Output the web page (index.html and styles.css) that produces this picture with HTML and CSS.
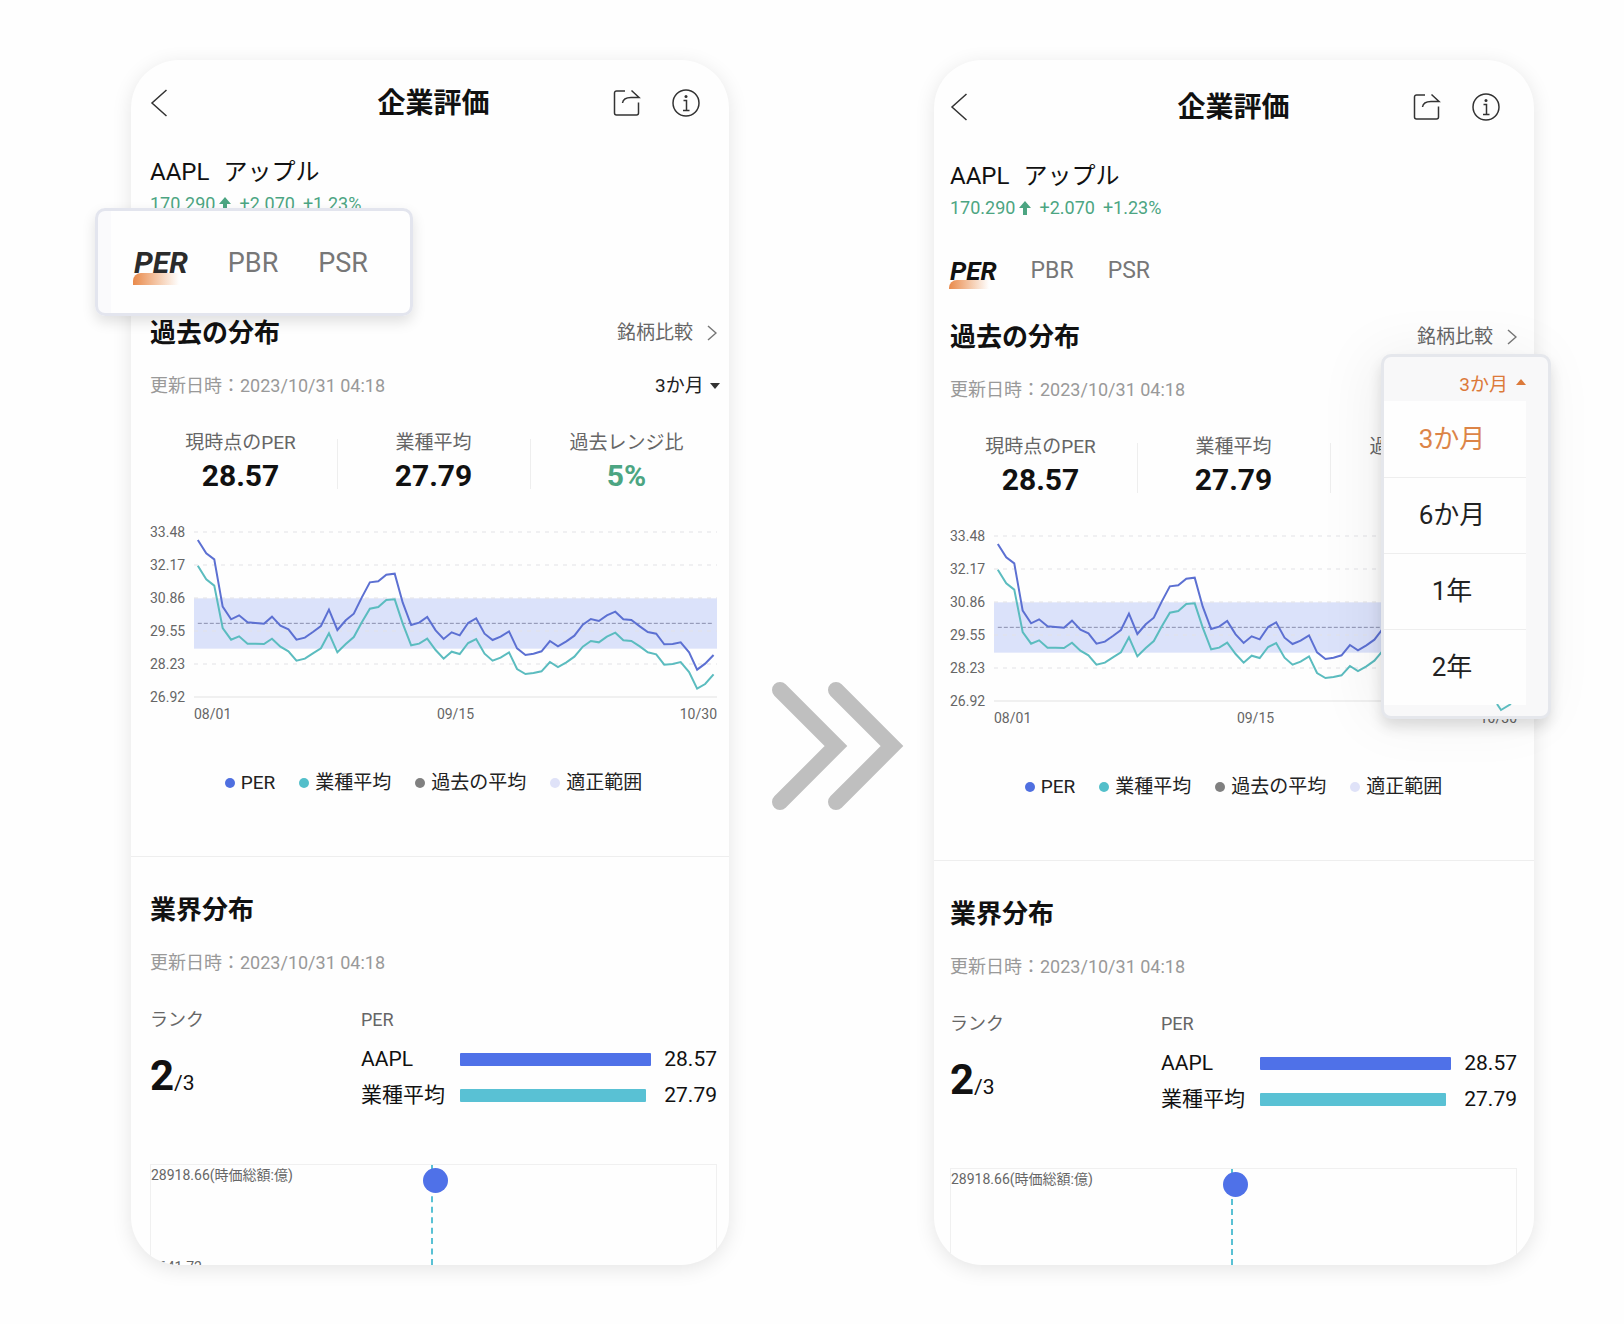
FILE: index.html
```
<!DOCTYPE html>
<html lang="ja">

<head>
    <meta charset="UTF-8">
    <meta name="viewport" content="width=device-width, initial-scale=1.0">
    <title>企業評価</title>
    <link rel="stylesheet" href="styles.css">
</head>

<body>
    <!-- shared icons and chart -->
    <svg class="defs" aria-hidden="true">
        <symbol id="icon-back" viewBox="0 0 18 28">
            <path d="M16.500 1L2 14l14.500 13" />
        </symbol>
        <symbol id="icon-share" viewBox="0 0 28 28">
            <path d="M12 2H3.500a2 2 0 0 0-2 2v20a2 2 0 0 0 2 2h20a2 2 0 0 0 2-2V13.500M18.500 1.500L26 8.500H18c-5 0-8 2-8.500 5.500" />
        </symbol>
        <symbol id="icon-info" viewBox="0 0 28 28">
            <circle cx="14" cy="14" r="13" />
            <path d="M11.500 11.500H14.500V21M11 21.500h6.500" />
            <circle class="fill" cx="14" cy="7.500" r="1.500" />
        </symbol>
        <symbol id="icon-next" viewBox="0 0 10 16">
            <path d="M1 1l8 7-8 7" />
        </symbol>
        <symbol id="chart" viewBox="0 0 1368 495" preserveAspectRatio="none">
            <rect class="band" x="0" y="199" width="1368" height="151" />
            <path class="grid" d="M0 0H1368M0 99H1368M0 198H1368M0 297H1368M0 396H1368" />
            <path class="axis" d="M0 495H1368" />
            <path class="average" d="M10 274H1359" />
            <polyline class="line-sector" points="10,101 32,142 53,161 75,288 97,323 118,313 140,335 161,335 183,336 204,320 226,344 247,358 268,386 290,380 311,364 332,349 353,304 375,361 397,336 418,315 439,271 460,230 482,225 503,204 525,202 546,275 568,340 589,335 610,320 632,354 653,380 674,359 695,366 717,333 738,321 760,365 781,386 802,377 824,361 845,411 867,426 888,423 909,418 931,390 952,405 974,391 995,374 1017,344 1038,327 1059,331 1080,314 1102,302 1123,325 1144,327 1166,343 1187,361 1209,367 1230,398 1252,396 1273,390 1295,420 1316,470 1337,456 1359,427" />
            <polyline class="line-per" points="10,24 32,64 53,82 75,224 97,262 118,250 140,271 161,273 183,275 204,254 226,281 247,292 268,323 290,317 311,300 332,282 353,233 375,294 397,265 418,245 439,196 460,151 482,148 503,128 525,125 546,212 568,279 589,272 610,255 632,295 653,321 674,301 695,310 717,273 738,259 760,305 781,324 802,314 824,298 845,349 867,369 888,365 909,358 931,327 952,343 974,328 995,311 1017,278 1038,261 1059,267 1080,250 1102,239 1123,262 1144,264 1166,283 1187,300 1209,305 1230,337 1252,336 1273,331 1295,361 1316,413 1337,395 1359,369" />
        </symbol>
    </svg>

    <main class="compare">
        <div class="phone">
            <div class="screen">
                <header class="header">
                    <button class="icon-button" aria-label="戻る"><svg class="icon back"><use href="#icon-back" /></svg></button>
                    <h1>企業評価</h1>
                    <div class="actions">
                        <button class="icon-button" aria-label="共有"><svg class="icon"><use href="#icon-share" /></svg></button>
                        <button class="icon-button" aria-label="情報"><svg class="icon"><use href="#icon-info" /></svg></button>
                    </div>
                </header>

                <section class="content">
                    <p class="symbol"><span>AAPL</span><span>アップル</span></p>
                    <p class="price">
                        <span>170.290</span>
                        <svg class="up" viewBox="0 0 12 14"><path d="M6 0l6 7H8v7H4V7H0z" /></svg>
                        <span>+2.070</span>
                        <span>+1.23%</span>
                    </p>
                    <div class="tabs-space"></div>

                    <div class="title-row">
                        <h2>過去の分布</h2>
                        <a class="more" href="#">銘柄比較<svg class="next"><use href="#icon-next" /></svg></a>
                    </div>
                    <div class="date-row">
                        <p class="date">更新日時：2023/10/31 04:18</p>
                        <div class="period">
                            <select aria-label="期間">
                                <option>3か月</option>
                                <option>6か月</option>
                                <option>1年</option>
                                <option>2年</option>
                            </select>
                            <span class="arrow-down"></span>
                        </div>
                    </div>

                    <dl class="stats">
                        <div class="stat"><dt>現時点のPER</dt><dd>28.57</dd></div>
                        <div class="stat"><dt>業種平均</dt><dd>27.79</dd></div>
                        <div class="stat"><dt>過去レンジ比</dt><dd class="green">5%</dd></div>
                    </dl>

                    <div class="chart">
                        <div class="y-labels"><span>33.48</span><span>32.17</span><span>30.86</span><span>29.55</span><span>28.23</span><span>26.92</span></div>
                        <svg class="plot"><use href="#chart" /></svg>
                        <div class="x-labels"><span>08/01</span><span>09/15</span><span>10/30</span></div>
                    </div>
                    <ul class="legend">
                        <li class="blue">PER</li>
                        <li class="teal">業種平均</li>
                        <li class="gray">過去の平均</li>
                        <li class="pale">適正範囲</li>
                    </ul>
                </section>

                <section class="content industry">
                    <h2>業界分布</h2>
                    <p class="date">更新日時：2023/10/31 04:18</p>
                    <div class="ranking">
                        <div>
                            <p class="label">ランク</p>
                            <p class="rank"><strong>2</strong>/3</p>
                        </div>
                        <div>
                            <p class="label">PER</p>
                            <div class="bar-row"><span>AAPL</span><div class="track"><div class="bar bar-blue" style="width: 100%"></div></div><span class="value">28.57</span></div>
                            <div class="bar-row"><span>業種平均</span><div class="track"><div class="bar bar-teal" style="width: 97.3%"></div></div><span class="value">27.79</span></div>
                        </div>
                    </div>
                    <div class="scatter">
                        <span>28918.66(時価総額:億)</span>
                        <span class="cut">9641.72</span>
                        <div class="marker-line"></div>
                        <div class="marker"></div>
                    </div>
                </section>
            </div>

            <div class="tabs tabs-popup">
                <button class="tab active">PER</button>
                <button class="tab">PBR</button>
                <button class="tab">PSR</button>
            </div>
        </div>

        <svg class="arrows" viewBox="0 0 132 128" aria-hidden="true">
            <path d="M8 8l56 56-56 56M64 8l56 56-56 56" />
        </svg>

        <div class="phone">
            <div class="screen screen-menu">
                <header class="header">
                    <button class="icon-button" aria-label="戻る"><svg class="icon back"><use href="#icon-back" /></svg></button>
                    <h1>企業評価</h1>
                    <div class="actions">
                        <button class="icon-button" aria-label="共有"><svg class="icon"><use href="#icon-share" /></svg></button>
                        <button class="icon-button" aria-label="情報"><svg class="icon"><use href="#icon-info" /></svg></button>
                    </div>
                </header>

                <section class="content">
                    <p class="symbol"><span>AAPL</span><span>アップル</span></p>
                    <p class="price">
                        <span>170.290</span>
                        <svg class="up" viewBox="0 0 12 14"><path d="M6 0l6 7H8v7H4V7H0z" /></svg>
                        <span>+2.070</span>
                        <span>+1.23%</span>
                    </p>
                    <div class="tabs">
                        <button class="tab active">PER</button>
                        <button class="tab">PBR</button>
                        <button class="tab">PSR</button>
                    </div>

                    <div class="title-row">
                        <h2>過去の分布</h2>
                        <a class="more" href="#">銘柄比較<svg class="next"><use href="#icon-next" /></svg></a>
                    </div>
                    <div class="date-row">
                        <p class="date">更新日時：2023/10/31 04:18</p>
                    </div>

                    <dl class="stats">
                        <div class="stat"><dt>現時点のPER</dt><dd>28.57</dd></div>
                        <div class="stat"><dt>業種平均</dt><dd>27.79</dd></div>
                        <div class="stat"><dt>過去レンジ比</dt><dd class="green">5%</dd></div>
                    </dl>

                    <div class="chart">
                        <div class="y-labels"><span>33.48</span><span>32.17</span><span>30.86</span><span>29.55</span><span>28.23</span><span>26.92</span></div>
                        <svg class="plot"><use href="#chart" /></svg>
                        <div class="x-labels"><span>08/01</span><span>09/15</span><span>10/30</span></div>
                    </div>
                    <ul class="legend">
                        <li class="blue">PER</li>
                        <li class="teal">業種平均</li>
                        <li class="gray">過去の平均</li>
                        <li class="pale">適正範囲</li>
                    </ul>
                </section>

                <section class="content industry">
                    <h2>業界分布</h2>
                    <p class="date">更新日時：2023/10/31 04:18</p>
                    <div class="ranking">
                        <div>
                            <p class="label">ランク</p>
                            <p class="rank"><strong>2</strong>/3</p>
                        </div>
                        <div>
                            <p class="label">PER</p>
                            <div class="bar-row"><span>AAPL</span><div class="track"><div class="bar bar-blue" style="width: 100%"></div></div><span class="value">28.57</span></div>
                            <div class="bar-row"><span>業種平均</span><div class="track"><div class="bar bar-teal" style="width: 97.3%"></div></div><span class="value">27.79</span></div>
                        </div>
                    </div>
                    <div class="scatter">
                        <span>28918.66(時価総額:億)</span>
                        <div class="marker-line"></div>
                        <div class="marker"></div>
                    </div>
                </section>
            </div>

            <div class="menu">
                <button class="menu-toggle" aria-expanded="true">3か月<span class="arrow-up"></span></button>
                <div class="menu-list">
                    <button class="option selected">3か月</button>
                    <button class="option">6か月</button>
                    <button class="option">1年</button>
                    <button class="option">2年</button>
                </div>
                <svg class="menu-line" viewBox="0 0 16 8"><path d="M1 0l4 6 10-6" /></svg>
            </div>
        </div>
    </main>
</body>

</html>
```
FILE: styles.css
```
* {
    box-sizing: border-box;
}

body {
    margin: 0;
    background-color: #fefefe;
    color: #111;
    font-family: Roboto, "Noto Sans CJK JP", sans-serif;
}

h1,
h2,
p,
dl,
dd,
ul {
    margin: 0;
    padding: 0;
}

button {
    padding: 0;
    border: none;
    background: none;
    color: inherit;
    font: inherit;
    cursor: pointer;
}

.defs {
    position: absolute;
    width: 0;
    height: 0;
}

.compare {
    display: grid;
    grid-template-columns: 598fr 205fr 600fr;
    padding: 60px 90px 56px 131px;
}

.phone {
    position: relative;
    display: flex;
}

.screen {
    flex: 1;
    display: flex;
    flex-direction: column;
    overflow: hidden;
    border-radius: 48px;
    background-color: #fefefe;
    box-shadow: 0 4px 20px rgba(0, 0, 0, 0.1);
}

.screen-menu {
    padding-top: 4px;
}

.content,
.header {
    padding: 0 12px 0 19px;
}

.screen-menu .content,
.screen-menu .header {
    padding-left: 16px;
    padding-right: 17px;
}

/* header */
.header {
    display: grid;
    grid-template-columns: 1fr auto 1fr;
    align-items: center;
    height: 85px;
}

h1 {
    padding-top: 2px;
    font-size: 28px;
    line-height: 40px;
    font-weight: 700;
}

.icon-button {
    display: flex;
    justify-self: start;
}

.icon {
    width: 28px;
    height: 28px;
    fill: none;
    stroke: #333;
    stroke-width: 1.5;
}

.icon-button .fill,
.fill {
    fill: #333;
    stroke: none;
}

.icon.back {
    width: 18px;
}

.actions {
    display: flex;
    justify-content: flex-end;
    gap: 31px;
    padding-right: 17px;
}

/* quote */
.symbol {
    display: flex;
    gap: 14px;
    margin-top: 11px;
    font-size: 24px;
    line-height: 32px;
}

.price {
    display: flex;
    align-items: center;
    gap: 8px;
    margin-top: 4px;
    color: #4ca582;
    font-size: 18px;
    line-height: 24px;
}

.up {
    width: 12px;
    height: 14px;
    margin-left: -4px;
    fill: #4ca582;
}

.tabs {
    display: flex;
    align-items: center;
    gap: 34px;
    margin-top: 35px;
    font-size: 23px;
    line-height: 32px;
}

/* room kept free under the enlarged tabs */
.tabs-space {
    height: 32px;
    margin-top: 35px;
}

.tab {
    color: #777;
}

.tab.active {
    position: relative;
    z-index: 0;
    color: #111;
    font-size: 26px;
    font-style: italic;
    font-weight: 700;
}

.tab.active::before {
    content: "";
    position: absolute;
    z-index: -1;
    left: -1px;
    bottom: -2px;
    width: 40px;
    height: 9px;
    border-top-left-radius: 8px;
    background: linear-gradient(90deg, #e98a4b, #f6d0b5 60%, #fefefe);
}

/* history */
.title-row,
.date-row {
    display: flex;
    align-items: center;
    justify-content: space-between;
}

.title-row {
    margin-top: 32px;
}

h2 {
    font-size: 26px;
    line-height: 36px;
    font-weight: 700;
}

.more {
    display: flex;
    align-items: center;
    gap: 14px;
    color: #666;
    font-size: 19px;
    line-height: 24px;
    text-decoration: none;
}

.next {
    width: 10px;
    height: 16px;
    fill: none;
    stroke: #777;
    stroke-width: 1.5;
}

.date-row {
    margin-top: 23px;
}

.date {
    color: #999;
    font-size: 18px;
    line-height: 24px;
}

.period {
    display: flex;
    align-items: center;
    gap: 6px;
    margin-right: -3px;
}

.period select {
    appearance: none;
    padding: 0;
    border: none;
    background: none;
    color: #222;
    font-family: inherit;
    font-size: 19px;
    line-height: 24px;
    height: 24px;
}

.arrow-down,
.arrow-up {
    border: 5px solid transparent;
}

.arrow-down {
    border-top: 6px solid #333;
    border-bottom: none;
}

.arrow-up {
    border-top: none;
    border-bottom: 6px solid #dc7a3a;
}

.stats {
    display: grid;
    grid-template-columns: repeat(3, 1fr);
    margin: 33px -6px 0;
    text-align: center;
}

.stat {
    position: relative;
}

.stat + .stat::before {
    content: "";
    position: absolute;
    left: 0;
    top: 8px;
    width: 1px;
    height: 50px;
    background-color: #eee;
}

.stat dt {
    color: #666;
    font-size: 19px;
    line-height: 24px;
}

.stat dd {
    margin-top: 3px;
    font-size: 30px;
    line-height: 36px;
    font-weight: 700;
}

.stat .green {
    color: #4ca582;
}

/* chart */
.chart {
    display: grid;
    grid-template-columns: 44px 1fr;
    margin-top: 31px;
    color: #666;
    font-size: 14px;
}

.y-labels {
    display: flex;
    flex-direction: column;
    justify-content: space-between;
    height: 179px;
    line-height: 14px;
}

.plot {
    align-self: center;
    width: 100%;
    height: 165px;
    overflow: visible;
}

#chart {
    overflow: visible;
}

#chart * {
    fill: none;
    vector-effect: non-scaling-stroke;
}

#chart .band {
    fill: #dbe2fa;
}

.grid {
    stroke: #e2e2e6;
    stroke-dasharray: 4 5;
}

.axis {
    stroke: #f0f0f0;
    stroke-width: 2;
}

.average {
    stroke: #8a8fae;
    stroke-dasharray: 4 2;
}

.line-per {
    stroke: #5c70d2;
    stroke-width: 2;
}

.line-sector {
    stroke: #5bbcbf;
    stroke-width: 2;
}

.x-labels {
    grid-column: 2;
    display: flex;
    justify-content: space-between;
    margin-top: 2px;
    line-height: 16px;
}

.legend {
    display: flex;
    justify-content: center;
    gap: 24px;
    margin-top: 49px;
    color: #222;
    font-size: 19px;
    line-height: 24px;
    list-style: none;
}

.legend li {
    display: flex;
    align-items: center;
    gap: 6px;
}

.legend li::before {
    content: "";
    width: 10px;
    height: 10px;
    border-radius: 50%;
    background-color: #4f6fe0;
}

.legend .teal::before {
    background-color: #53bfca;
}

.legend .gray::before {
    background-color: #808080;
}

.legend .pale::before {
    background-color: #dfe2f8;
}

/* industry */
.industry {
    flex: 1;
    display: flex;
    flex-direction: column;
    margin-top: 61px;
    padding-top: 35px;
    border-top: 1px solid #eee;
}

.industry .date {
    margin-top: 23px;
}

.ranking {
    display: grid;
    grid-template-columns: 211fr 356fr;
    margin-top: 33px;
}

.label {
    color: #666;
    font-size: 18px;
    line-height: 24px;
}

.rank {
    margin-top: 22px;
    font-size: 21px;
    line-height: 44px;
}

.rank strong {
    font-size: 42px;
}

.label + .bar-row {
    margin-top: 9px;
}

.bar-row {
    display: grid;
    grid-template-columns: 86px 1fr 53px;
    align-items: center;
    gap: 13px;
    font-size: 21px;
    line-height: 36px;
}

.bar {
    height: 13px;
    border-radius: 1px;
}

.bar-blue {
    background-color: #4f71e8;
}

.bar-teal {
    background-color: #59c1d4;
}

.value {
    text-align: right;
}

.scatter {
    position: relative;
    flex: 1;
    min-height: 97px;
    margin-top: 51px;
    border: 1px solid #f0f0f0;
    border-bottom: none;
    color: #666;
    font-size: 14px;
    line-height: 20px;
}

.cut {
    position: absolute;
    left: 0;
    bottom: -12px;
}

.marker-line {
    position: absolute;
    left: 49.5%;
    top: 0;
    bottom: 0;
    border-left: 2px dashed #59c1d4;
}

.marker {
    position: absolute;
    left: 49.5%;
    top: 3px;
    width: 25px;
    height: 25px;
    margin-left: -8px;
    border-radius: 50%;
    background-color: #4f71e8;
}

/* arrows between the screens */
.arrows {
    width: 132px;
    margin: 622px 30px 0 auto;
    fill: none;
    stroke: #bfbfbf;
    stroke-width: 16;
    stroke-linecap: round;
}

/* enlarged tabs */
.tabs-popup {
    position: absolute;
    left: -36px;
    top: 148px;
    gap: 40px;
    margin: 0;
    padding: 36px 42px 34px 36px;
    border: 3px solid #e3e5ee;
    border-radius: 10px;
    background: linear-gradient(90deg, #fafafc 13px, #fefefe 13px);
    box-shadow: 0 6px 14px rgba(0, 0, 0, 0.12);
    font-size: 27px;
}

.tabs-popup .tab.active {
    color: #2b2b2b;
    font-size: 30px;
}

.tabs-popup .tab.active::before {
    bottom: -6px;
    width: 46px;
    height: 12px;
}

/* open period menu */
.menu {
    position: absolute;
    right: -17px;
    top: 294px;
    width: 170px;
    padding-bottom: 11px;
    border: 3px solid #e5e7ec;
    border-radius: 10px;
    background-color: #f8f8f9;
    box-shadow: 0 8px 14px rgba(0, 0, 0, 0.12), -10px 0 60px rgba(0, 0, 0, 0.06);
}

.menu-toggle {
    display: flex;
    align-items: center;
    gap: 8px;
    height: 44px;
    margin: 0 22px 0 auto;
    padding-top: 6px;
    color: #dc7a3a;
    font-size: 19px;
}

.menu-list {
    margin-right: 22px;
    background-color: #fefefe;
}

.option {
    display: block;
    width: 100%;
    height: 76px;
    padding: 0 6px 6px 0;
    color: #222;
    font-size: 26px;
}

.option + .option {
    border-top: 1px solid #eee;
}

.option.selected {
    color: #dc8447;
}

.menu-line {
    position: absolute;
    right: 36px;
    bottom: 4px;
    width: 16px;
    height: 8px;
    fill: none;
    stroke: #5bbcbf;
    stroke-width: 2;
}
```
